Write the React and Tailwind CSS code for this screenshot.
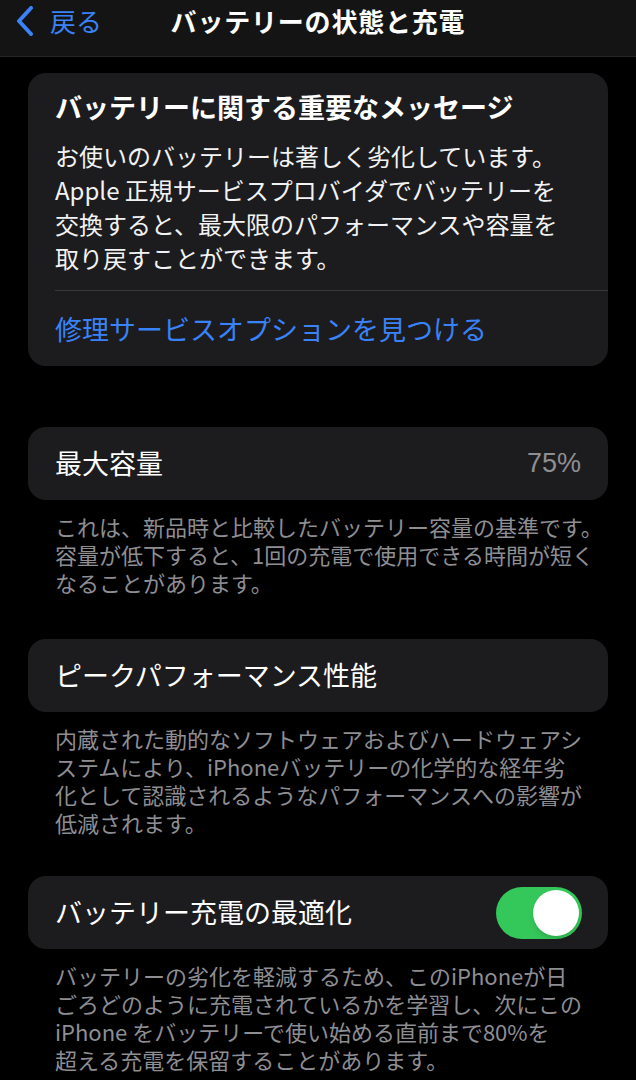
import React from 'react';

const font = { fontFamily: '"Noto Sans CJK JP", "Noto Sans", sans-serif' };

const Footnote = ({ lines }) => (
    <p className="mt-3 px-[27px] text-[22px] leading-[28px] text-[#8e8e93]">
        {lines.map((l, i) => (
            <span key={i} className="block whitespace-nowrap">{l}</span>
        ))}
    </p>
);

export default function App() {
    return (
        <div className="min-h-[1080px] w-[636px] bg-black text-white overflow-hidden" style={font}>
            {/* Nav bar */}
            <header className="h-[57px] bg-[#141414] border-b border-[#262626] flex items-center relative">
                <div className="flex items-center pl-[14px] gap-[14px] pb-[14px]">
                    <svg width="22" height="30" viewBox="0 0 22 30" fill="none">
                        <path d="M17 2 L5 15 L17 28" stroke="#3a82f7" strokeWidth="4" strokeLinecap="round" strokeLinejoin="round" />
                    </svg>
                    <span className="text-[26px] leading-none text-[#3a82f7]">戻る</span>
                </div>
                <h1 className="absolute left-0 right-0 top-0 pt-[4px] text-center text-[26px] leading-[34px] font-semibold tracking-[0.8px]">
                    バッテリーの状態と充電
                </h1>
            </header>

            <main className="px-[28px] pt-[16px]">
                {/* Important message card */}
                <section className="bg-[#1c1c1e] rounded-[18px] pt-[17px] pb-[20px]">
                    <h2 className="px-[27px] text-[27px] leading-[34px] font-semibold">
                        バッテリーに関する重要なメッセージ
                    </h2>
                    <p className="mt-[15px] px-[27px] text-[24px] leading-[34px] text-[#f2f2f2]">
                        <span className="block whitespace-nowrap">お使いのバッテリーは著しく劣化しています。</span>
                        <span className="block whitespace-nowrap">Apple 正規サービスプロバイダでバッテリーを</span>
                        <span className="block whitespace-nowrap">交換すると、最大限のパフォーマンスや容量を</span>
                        <span className="block whitespace-nowrap">取り戻すことができます。</span>
                    </p>
                    <div className="ml-[27px] mt-[15px] h-px bg-[#38383a]"></div>
                    <a className="block mt-[21px] px-[27px] text-[27px] leading-[34px] text-[#3a82f7]">
                        修理サービスオプションを見つける
                    </a>
                </section>

                {/* Maximum capacity */}
                <section className="mt-[61px] bg-[#1c1c1e] rounded-[18px] h-[73px] px-[27px] flex items-center justify-between">
                    <span className="text-[27px]">最大容量</span>
                    <span className="text-[27px] text-[#8e8e93]" style={{ fontFamily: '"Liberation Sans", sans-serif' }}>75%</span>
                </section>
                <Footnote
                    lines={[
                        'これは、新品時と比較したバッテリー容量の基準です。',
                        '容量が低下すると、1回の充電で使用できる時間が短く',
                        'なることがあります。',
                    ]}
                />

                {/* Peak performance */}
                <section className="mt-[43px] bg-[#1c1c1e] rounded-[18px] h-[73px] px-[27px] flex items-center">
                    <span className="text-[27px]">ピークパフォーマンス性能</span>
                </section>
                <Footnote
                    lines={[
                        '内蔵された動的なソフトウェアおよびハードウェアシ',
                        'ステムにより、iPhoneバッテリーの化学的な経年劣',
                        '化として認識されるようなパフォーマンスへの影響が',
                        '低減されます。',
                    ]}
                />

                {/* Optimized charging */}
                <section className="mt-[40px] bg-[#1c1c1e] rounded-[18px] h-[73px] pl-[27px] pr-[26px] flex items-center justify-between">
                    <span className="text-[27px]">バッテリー充電の最適化</span>
                    <div className="w-[86px] h-[52px] rounded-full bg-[#34c759] flex items-center justify-end pr-[3px]">
                        <div className="w-[46px] h-[46px] rounded-full bg-white shadow-md"></div>
                    </div>
                </section>
                <Footnote
                    lines={[
                        'バッテリーの劣化を軽減するため、このiPhoneが日',
                        'ごろどのように充電されているかを学習し、次にこの',
                        'iPhone をバッテリーで使い始める直前まで80%を',
                        '超える充電を保留することがあります。',
                    ]}
                />
            </main>
        </div>
    );
}
